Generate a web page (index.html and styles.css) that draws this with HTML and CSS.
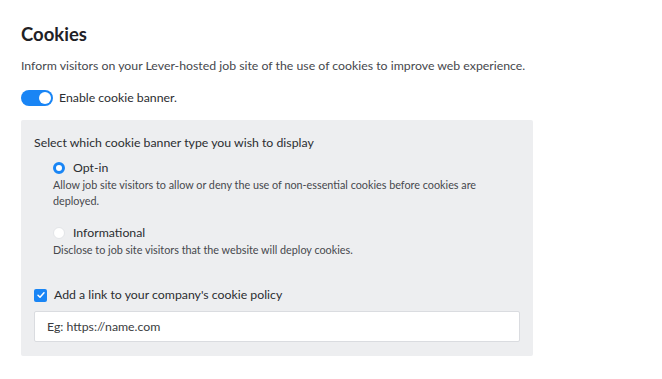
FILE: index.html
```html
<!DOCTYPE html>
<html lang="en">
<head>
  <meta charset="UTF-8" />
  <title>Cookies</title>
  <link rel="stylesheet" href="styles.css">
</head>
<body>
  <section class="cookies">
    <h2 class="title">Cookies</h2>
    <p class="intro">Inform visitors on your Lever-hosted job site of the use of cookies to improve web experience.</p>

    <label class="toggle-row">
      <span class="toggle on"><span class="knob"></span></span>
      <span>Enable cookie banner.</span>
    </label>

    <div class="panel">
      <div class="panel-label">Select which cookie banner type you wish to display</div>

      <div class="option">
        <div class="option-head">
          <span class="radio checked"></span>
          <span>Opt-in</span>
        </div>
        <p class="option-desc">Allow job site visitors to allow or deny the use of non-essential cookies before cookies are deployed.</p>
      </div>

      <div class="option">
        <div class="option-head">
          <span class="radio"></span>
          <span>Informational</span>
        </div>
        <p class="option-desc">Disclose to job site visitors that the website will deploy cookies.</p>
      </div>

      <label class="check-row">
        <span class="checkbox">
          <svg viewBox="0 0 12 12" width="12" height="12"><path d="M3 6.2l2 2 4-4.4" fill="none" stroke="#fff" stroke-width="1.5" stroke-linecap="round" stroke-linejoin="round"/></svg>
        </span>
        <span>Add a link to your company's cookie policy</span>
      </label>
      <input class="url" type="text" placeholder="Eg: https://name.com" />
    </div>
  </section>
</body>
</html>
```

FILE: styles.css
```css
*{box-sizing:border-box}
body{margin:0;background:#fff;font-family:Lato,sans-serif;color:#2b2d31}
.cookies{padding:22px 21px}
.title{margin:0;font-size:18.5px;font-weight:700;color:#1f2126;line-height:24px}
.intro{margin:11px 0 0;font-size:12.3px;line-height:18px;color:#46484d}
.toggle-row{display:flex;align-items:center;gap:6px;margin-top:14px;font-size:12.3px;line-height:18px}
.toggle{width:32px;height:16px;border-radius:8px;background:#1985f5;position:relative;display:block}
.toggle .knob{position:absolute;right:2px;top:2px;width:12px;height:12px;border-radius:50%;background:#fff}
.panel{margin-top:13px;width:512px;background:#edeef0;border-radius:2px;padding:14px 13px}
.panel-label{font-size:12.3px;line-height:18px}
.option{padding-left:19px;margin-top:7px}
.option + .option{margin-top:15px}
.option-head{display:flex;align-items:center;gap:8px;font-size:12.3px;line-height:18px}
.radio{width:12px;height:12px;border-radius:50%;background:#fff;border:1px solid #e3e5e8}
.radio.checked{background:#fff;border:3.5px solid #1985f5}
.option-desc{margin:0;font-size:10.8px;line-height:16px;color:#46484d}
.check-row{display:flex;align-items:center;gap:7px;margin-top:28px;font-size:12.3px;line-height:18px}
.checkbox{width:13px;height:13px;border-radius:2px;background:#1985f5;display:flex;align-items:center;justify-content:center}
.url{display:block;margin-top:7px;width:486px;height:31px;border:1px solid #dadce0;border-radius:2px;background:#fff;padding:0 12px;font-family:inherit;font-size:12.3px;color:#2b2d31}
.url::placeholder{color:#3a3c40}
```
